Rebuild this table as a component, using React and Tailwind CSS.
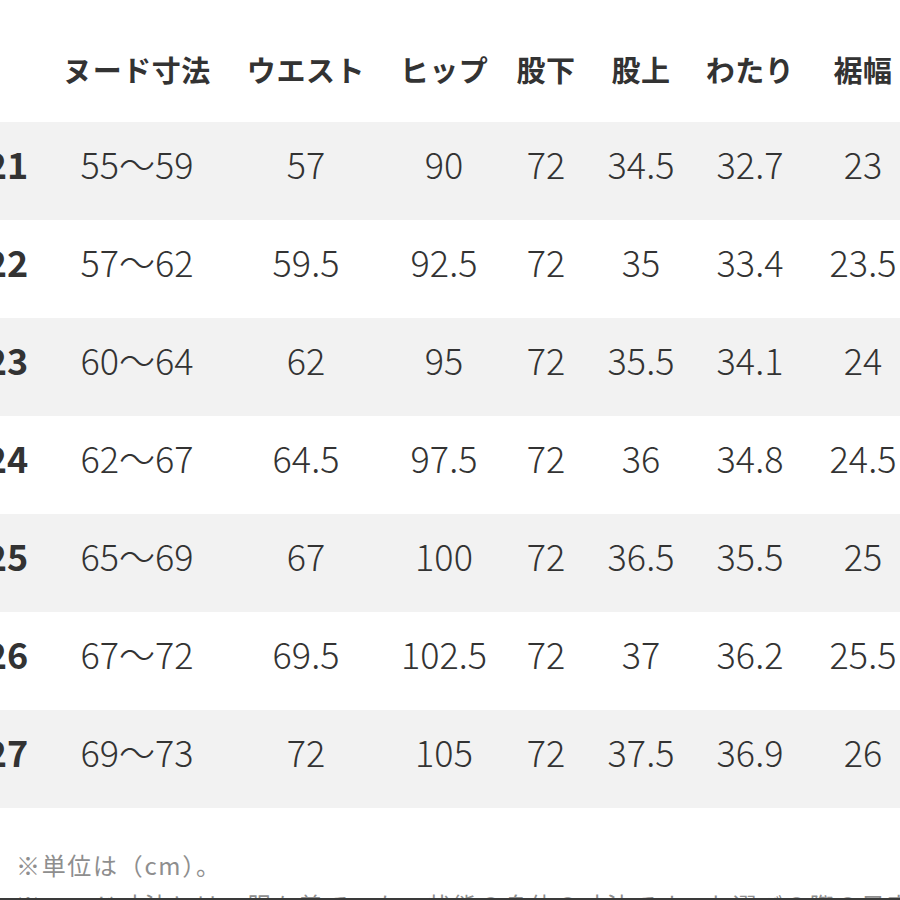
import React from 'react'

const cols = 'grid grid-cols-[94px_166px_172px_104px_100px_90px_128px_98px] items-center'

const headers = ['', 'ヌード寸法', 'ウエスト', 'ヒップ', '股下', '股上', 'わたり', '裾幅']

const rows = [
    ['21', '55〜59', '57', '90', '72', '34.5', '32.7', '23'],
    ['22', '57〜62', '59.5', '92.5', '72', '35', '33.4', '23.5'],
    ['23', '60〜64', '62', '95', '72', '35.5', '34.1', '24'],
    ['24', '62〜67', '64.5', '97.5', '72', '36', '34.8', '24.5'],
    ['25', '65〜69', '67', '100', '72', '36.5', '35.5', '25'],
    ['26', '67〜72', '69.5', '102.5', '72', '37', '36.2', '25.5'],
    ['27', '69〜73', '72', '105', '72', '37.5', '36.9', '26'],
]

const jp = { fontFamily: '"Noto Sans CJK JP", "Noto Sans", sans-serif' }

function App() {
    return (
        <div className="w-[900px] h-[900px] overflow-hidden bg-white border-b-[2px] border-[#3a3a3a]" style={jp}>
            <div className="ml-[-40px] w-[952px]">
                {/* 見出し */}
                <div className={`${cols} h-[122px] pt-[18px] text-[29px] font-bold text-[#333] tracking-[0.02em]`}>
                    {headers.map((h, i) => (
                        <div key={i} className="text-center whitespace-nowrap">{h}</div>
                    ))}
                </div>

                {rows.map((r, idx) => (
                    <div key={r[0]} className={`${cols} h-[98px] pb-[16px] ${idx % 2 === 0 ? 'bg-[#f2f2f2]' : 'bg-white'}`}>
                        {r.map((c, i) => (
                            <div
                                key={i}
                                className={`text-center whitespace-nowrap text-[36px] leading-none text-[#333] ${i === 0 ? 'font-bold' : 'font-light'}`}
                            >
                                {c}
                            </div>
                        ))}
                    </div>
                ))}
            </div>

            <div className="mt-[37px] pl-[16px] text-[24px] leading-[40px] tracking-[0.07em] text-[#8e8e8e] whitespace-nowrap">
                <p>※単位は（cm）。</p>
                <p>※ヌード寸法とは、服を着ていない状態の身体の寸法です。お選びの際の目安としてください。</p>
            </div>
        </div>
    )
}

export default App
